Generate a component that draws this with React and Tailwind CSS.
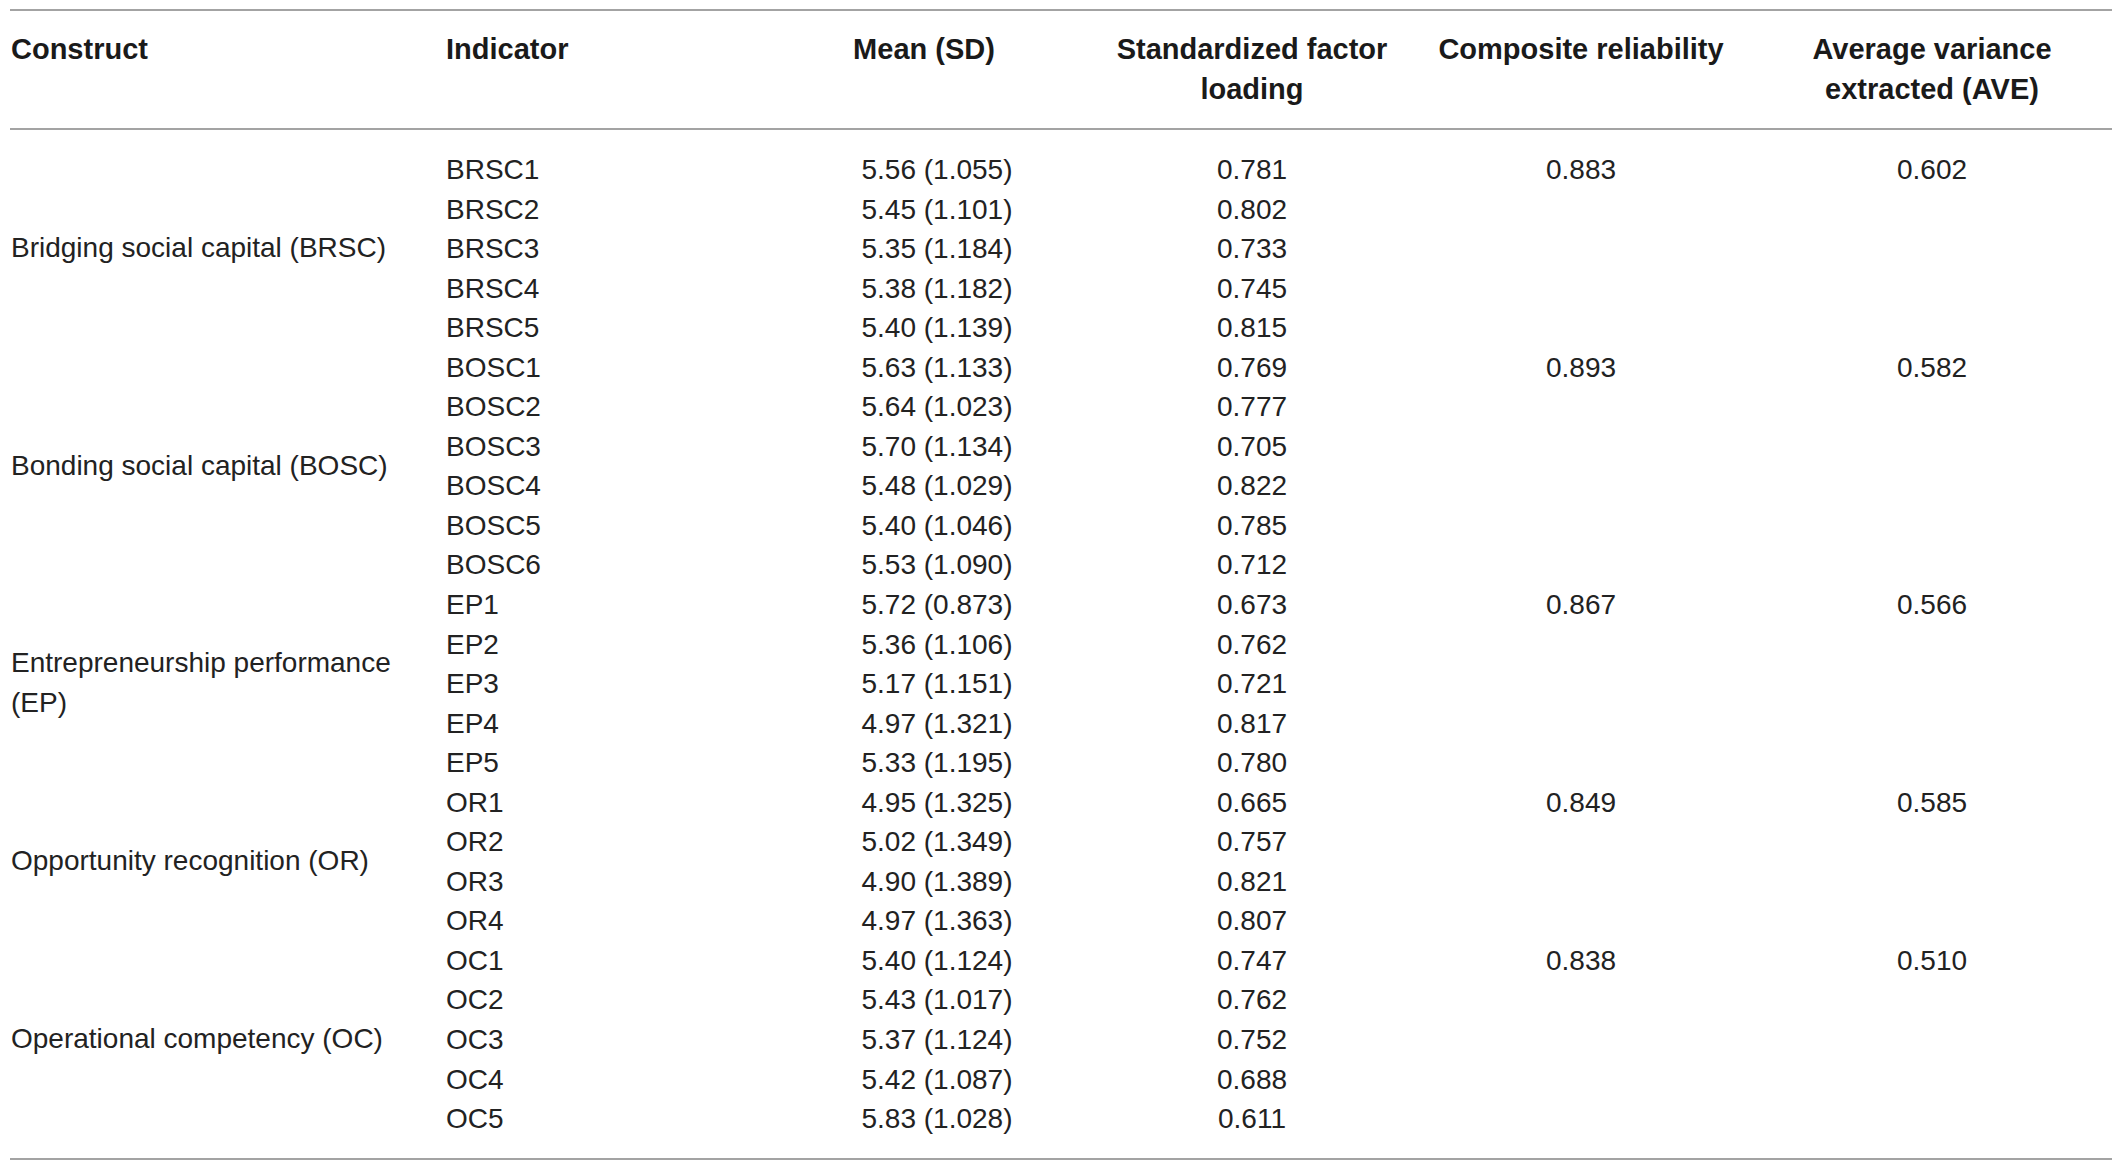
const GROUPS = [
  {
    name: "Bridging social capital (BRSC)", cr: "0.883", ave: "0.602",
    rows: [
      ["BRSC1", "5.56 (1.055)", "0.781"],
      ["BRSC2", "5.45 (1.101)", "0.802"],
      ["BRSC3", "5.35 (1.184)", "0.733"],
      ["BRSC4", "5.38 (1.182)", "0.745"],
      ["BRSC5", "5.40 (1.139)", "0.815"],
    ],
  },
  {
    name: "Bonding social capital (BOSC)", cr: "0.893", ave: "0.582",
    rows: [
      ["BOSC1", "5.63 (1.133)", "0.769"],
      ["BOSC2", "5.64 (1.023)", "0.777"],
      ["BOSC3", "5.70 (1.134)", "0.705"],
      ["BOSC4", "5.48 (1.029)", "0.822"],
      ["BOSC5", "5.40 (1.046)", "0.785"],
      ["BOSC6", "5.53 (1.090)", "0.712"],
    ],
  },
  {
    name: "Entrepreneurship performance (EP)", cr: "0.867", ave: "0.566",
    rows: [
      ["EP1", "5.72 (0.873)", "0.673"],
      ["EP2", "5.36 (1.106)", "0.762"],
      ["EP3", "5.17 (1.151)", "0.721"],
      ["EP4", "4.97 (1.321)", "0.817"],
      ["EP5", "5.33 (1.195)", "0.780"],
    ],
  },
  {
    name: "Opportunity recognition (OR)", cr: "0.849", ave: "0.585",
    rows: [
      ["OR1", "4.95 (1.325)", "0.665"],
      ["OR2", "5.02 (1.349)", "0.757"],
      ["OR3", "4.90 (1.389)", "0.821"],
      ["OR4", "4.97 (1.363)", "0.807"],
    ],
  },
  {
    name: "Operational competency (OC)", cr: "0.838", ave: "0.510",
    rows: [
      ["OC1", "5.40 (1.124)", "0.747"],
      ["OC2", "5.43 (1.017)", "0.762"],
      ["OC3", "5.37 (1.124)", "0.752"],
      ["OC4", "5.42 (1.087)", "0.688"],
      ["OC5", "5.83 (1.028)", "0.611"],
    ],
  },
];

function Group({ g }) {
  return (
    <div className="flex">
      <div className="w-[436px] shrink-0 flex items-center pl-px pr-[20px] leading-[39.5px]">
        {g.name}
      </div>
      <div className="flex-1">
        {g.rows.map((r, i) => (
          <div key={r[0]} className="grid grid-cols-[354px_248px_408px_250px_406px] h-[39.55px] items-center">
            <div>{r[0]}</div>
            <div className="text-center pl-[26px]">{r[1]}</div>
            <div className="text-center">{r[2]}</div>
            <div className="text-center">{i === 0 ? g.cr : ""}</div>
            <div className="text-center pl-[46px]">{i === 0 ? g.ave : ""}</div>
          </div>
        ))}
      </div>
    </div>
  );
}

export default function App() {
  return (
    <div className="w-[2121px] h-[1176px] bg-white pt-[9px] font-['Liberation_Sans',Arial,sans-serif] text-[#222]">
      <div className="ml-[10px] w-[2102px] border-t-2 border-b-2 border-[#a3a3a3]">
        <div className="grid grid-cols-[436px_354px_248px_408px_250px_406px] pt-[19px] pb-[19px] border-b-2 border-[#a3a3a3] text-[29px] font-bold leading-[39.5px] text-[#1a1a1a]">
          <div className="pl-px">Construct</div>
          <div>Indicator</div>
          <div className="text-center">Mean (SD)</div>
          <div className="text-center">Standardized factor<br />loading</div>
          <div className="flex justify-center whitespace-nowrap">Composite reliability</div>
          <div className="text-center pl-[46px]">Average variance<br />extracted (AVE)</div>
        </div>
        <div className="pt-[19px] pb-[20px] text-[28px]">
          {GROUPS.map((g) => (
            <Group key={g.name} g={g} />
          ))}
        </div>
      </div>
    </div>
  );
}
